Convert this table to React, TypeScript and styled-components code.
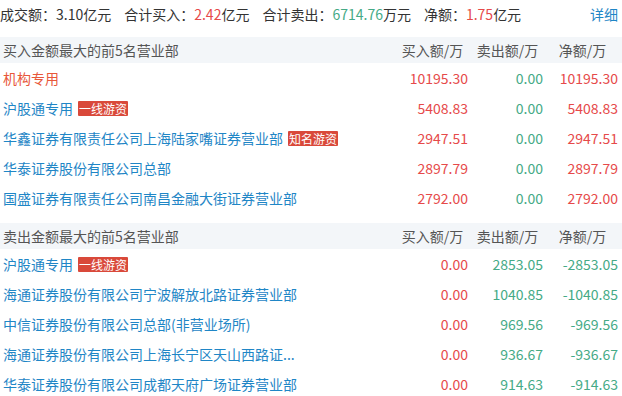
import * as React from 'react';
import styled, { createGlobalStyle } from 'styled-components';

const GlobalStyle = createGlobalStyle`
	body {
		margin: 0;
		background: #ffffff;
		font-family: "Microsoft YaHei", "Noto Sans CJK SC", sans-serif;
	}
`;

const RED = '#e64a4a';
const GREEN = '#45aa86';
const BLUE = '#1f86c6';

//Summary line
const Summary = styled.div`
	display: flex;
	align-items: center;
	height: 28px;
	padding-right: 4px;
	margin-bottom: 9px;
	font-size: 14px;
	color: #333;
	white-space: nowrap;
`;

const SummaryItem = styled.span`
	margin-right: 13px;
`;

const Num = styled.span<{ $tone: 'red' | 'green' }>`
	color: ${p => (p.$tone === 'red' ? RED : GREEN)};
`;

const Detail = styled.a`
	margin-left: auto;
	color: ${BLUE};
	text-decoration: none;
	cursor: pointer;
`;

//Table
const Section = styled.div<{ $gap?: boolean }>`
	margin-bottom: ${p => (p.$gap ? '10px' : '0')};
`;

const Grid = styled.div`
	display: grid;
	grid-template-columns: 1fr 75px 75px 75px;
	padding: 0 4px 0 3px;
	font-size: 14px;
	white-space: nowrap;
`;

const Head = styled(Grid)`
	height: 26px;
	align-items: center;
	background: #f3f6f9;
	color: #555;
`;

const HeadCell = styled.div`
	text-align: center;
	padding-left: 4px;
`;

const Row = styled(Grid)`
	height: 30px;
	align-items: center;
`;

const Name = styled.div<{ $org?: boolean }>`
	display: flex;
	align-items: center;
	min-width: 0;
	overflow: hidden;
	color: ${p => (p.$org ? '#e8573a' : BLUE)};
`;

const Badge = styled.span`
	display: inline-block;
	margin-left: 5px;
	height: 15px;
	line-height: 15px;
	padding: 0 1px;
	background: #d9493a;
	color: #fff;
	font-size: 12px;
	border-radius: 1px;
`;

const Val = styled.div<{ $tone: 'red' | 'green' }>`
	text-align: right;
	color: ${p => (p.$tone === 'red' ? RED : GREEN)};
`;

interface Trader {
	name: string;
	badge?: string;
	org?: boolean;
	buy: string;
	sell: string;
	net: string;
}

const buyList: Trader[] = [
	{ name: '机构专用', org: true, buy: '10195.30', sell: '0.00', net: '10195.30' },
	{ name: '沪股通专用', badge: '一线游资', buy: '5408.83', sell: '0.00', net: '5408.83' },
	{ name: '华鑫证券有限责任公司上海陆家嘴证券营业部', badge: '知名游资', buy: '2947.51', sell: '0.00', net: '2947.51' },
	{ name: '华泰证券股份有限公司总部', buy: '2897.79', sell: '0.00', net: '2897.79' },
	{ name: '国盛证券有限责任公司南昌金融大街证券营业部', buy: '2792.00', sell: '0.00', net: '2792.00' }
];

const sellList: Trader[] = [
	{ name: '沪股通专用', badge: '一线游资', buy: '0.00', sell: '2853.05', net: '-2853.05' },
	{ name: '海通证券股份有限公司宁波解放北路证券营业部', buy: '0.00', sell: '1040.85', net: '-1040.85' },
	{ name: '中信证券股份有限公司总部(非营业场所)', buy: '0.00', sell: '969.56', net: '-969.56' },
	{ name: '海通证券股份有限公司上海长宁区天山西路证...', buy: '0.00', sell: '936.67', net: '-936.67' },
	{ name: '华泰证券股份有限公司成都天府广场证券营业部', buy: '0.00', sell: '914.63', net: '-914.63' }
];

const tone = (v: string) => (v.startsWith('-') ? 'green' : 'red');

const TraderTable: React.FC<{ title: string; rows: Trader[]; gap?: boolean }> = ({ title, rows, gap }) => (
	<Section $gap={gap}>
		<Head>
			<div>{title}</div>
			<HeadCell>买入额/万</HeadCell>
			<HeadCell>卖出额/万</HeadCell>
			<HeadCell>净额/万</HeadCell>
		</Head>
		{rows.map((r, i) => (
			<Row key={i}>
				<Name $org={r.org}>
					{r.name}
					{r.badge && <Badge>{r.badge}</Badge>}
				</Name>
				<Val $tone="red">{r.buy}</Val>
				<Val $tone="green">{r.sell}</Val>
				<Val $tone={tone(r.net)}>{r.net}</Val>
			</Row>
		))}
	</Section>
);

export default function App() {
	return (
		<>
			<GlobalStyle />
			<Summary>
				<SummaryItem>成交额：3.10亿元</SummaryItem>
				<SummaryItem>合计买入：<Num $tone="red">2.42</Num>亿元</SummaryItem>
				<SummaryItem>合计卖出：<Num $tone="green">6714.76</Num>万元</SummaryItem>
				<SummaryItem>净额：<Num $tone="red">1.75</Num>亿元</SummaryItem>
				<Detail>详细</Detail>
			</Summary>
			<TraderTable title="买入金额最大的前5名营业部" rows={buyList} gap />
			<TraderTable title="卖出金额最大的前5名营业部" rows={sellList} />
		</>
	);
}
